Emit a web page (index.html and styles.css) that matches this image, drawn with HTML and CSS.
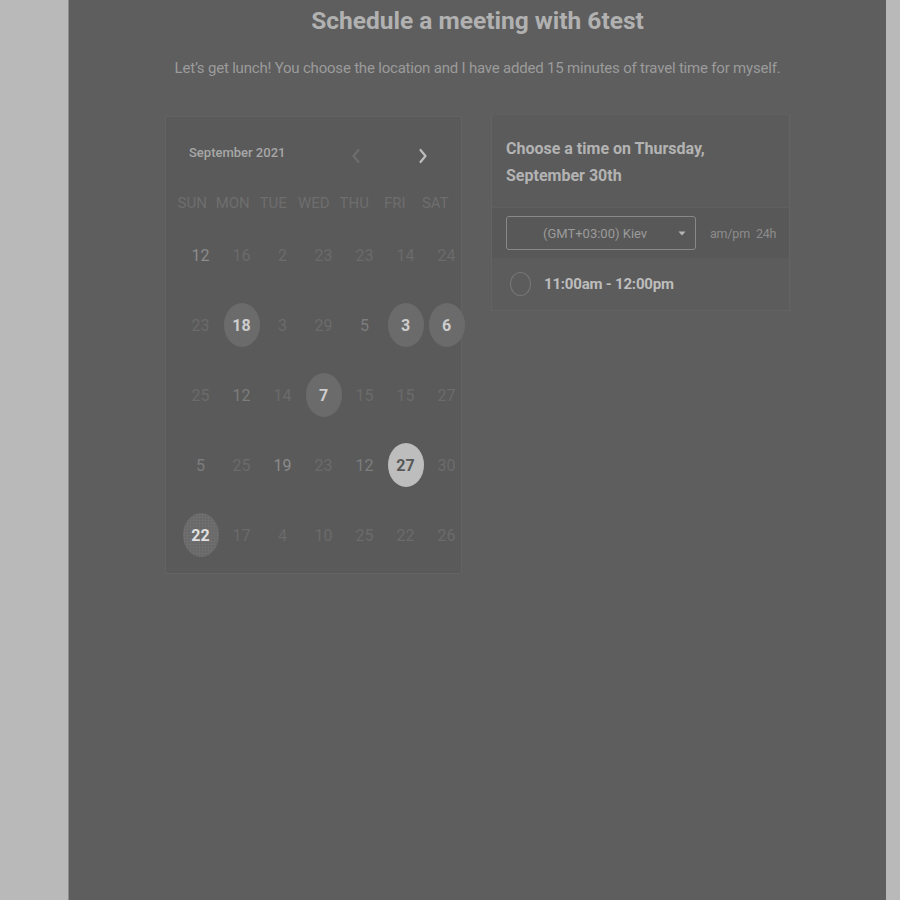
FILE: index.html
```html
<!DOCTYPE html>
<html lang="en">
<head>
<meta charset="utf-8">
<title>Schedule a meeting</title>
<link rel="stylesheet" href="styles.css">
</head>
<body>
<div class="page">
  <main class="panel">
    <h1 class="title">Schedule a meeting with 6test</h1>
    <p class="subtitle">Let’s get lunch! You choose the location and I have added 15 minutes of travel time for myself.</p>
    <div class="cards">
      <section class="calendar">
        <div class="cal-head">
          <span class="month">September 2021</span>
          <span class="nav prev"><svg width="10" height="16" viewBox="0 0 10 16"><path d="M7.5 2 L2.5 8 L7.5 14" fill="none" stroke="currentColor" stroke-width="2" stroke-linecap="round" stroke-linejoin="round"/></svg></span>
          <span class="nav next"><svg width="10" height="16" viewBox="0 0 10 16"><path d="M2.5 2 L7.5 8 L2.5 14" fill="none" stroke="currentColor" stroke-width="2.2" stroke-linecap="round" stroke-linejoin="round"/></svg></span>
        </div>
        <div class="weekdays">
          <span>SUN</span><span>MON</span><span>TUE</span><span>WED</span><span>THU</span><span>FRI</span><span>SAT</span>
        </div>
        <div class="days">
          <span class="day br">12</span><span class="day">16</span><span class="day">2</span><span class="day">23</span><span class="day">23</span><span class="day">14</span><span class="day">24</span>
          <span class="day">23</span><span class="day sel"><b>18</b></span><span class="day">3</span><span class="day">29</span><span class="day md">5</span><span class="day sel"><b>3</b></span><span class="day sel"><b>6</b></span>
          <span class="day">25</span><span class="day md">12</span><span class="day">14</span><span class="day sel"><b>7</b></span><span class="day">15</span><span class="day">15</span><span class="day">27</span>
          <span class="day md">5</span><span class="day">25</span><span class="day br">19</span><span class="day">23</span><span class="day md">12</span><span class="day active"><b>27</b></span><span class="day">30</span>
          <span class="day today"><b>22</b></span><span class="day">17</span><span class="day">4</span><span class="day">10</span><span class="day">25</span><span class="day">22</span><span class="day">26</span>
        </div>
      </section>
      <section class="times">
        <div class="times-head">Choose a time on Thursday,<br>September 30th</div>
        <div class="tz-row">
          <div class="tz-select">
            <span>(GMT+03:00) Kiev</span>
            <svg class="caret" width="8" height="5" viewBox="0 0 8 5"><path d="M0.5 0.5 H7.5 L4 4.5 Z" fill="currentColor"/></svg>
          </div>
          <div class="fmt"><span>am/pm</span><span>24h</span></div>
        </div>
        <div class="slot">
          <span class="radio"></span>
          <span class="slot-text">11:00am - 12:00pm</span>
        </div>
      </section>
    </div>
  </main>
</div>
</body>
</html>
```
FILE: styles.css
```css
html, body {
  margin: 0;
  padding: 0;
  background: #b9b9b9;
  font-family: Roboto, "Liberation Sans", sans-serif;
}
.page {
  display: flex;
  height: 900px;
  overflow: hidden;
}
.panel {
  margin-left: 68px;
  width: 817px;
  height: 900px;
  background: #5e5e5e;
  border-left: 1px solid #8e8e8e;
  display: flex;
  flex-direction: column;
  align-items: center;
}
.title {
  margin: 6px 0 0;
  font-size: 24.5px;
  line-height: 30px;
  font-weight: 700;
  letter-spacing: 0;
  color: #b1b1b1;
}
.subtitle {
  margin: 22px 0 0;
  font-size: 15px;
  line-height: 20px;
  font-weight: 400;
  letter-spacing: -0.2px;
  color: #9b9b9b;
}
.cards {
  margin-top: 36px;
  display: flex;
  align-items: flex-start;
  gap: 29px;
}
.calendar {
  margin-top: 2px;
  width: 295px;
  height: 456px;
  background: #5a5a5a;
  border: 1px solid #636363;
}
.cal-head {
  height: 68px;
  display: flex;
  align-items: center;
  padding-left: 23px;
}
.month {
  font-size: 13px;
  font-weight: 500;
  color: #a7a7a7;
  width: 160px;
  margin-top: 2px;
}
.nav {
  display: flex;
  margin-top: 10px;
}
.prev { color: #6e6e6e; margin-left: 2px; }
.next { color: #bdbdbd; margin-left: 57px; }
.weekdays {
  display: grid;
  grid-template-columns: repeat(7, 40.5px);
  padding-left: 6px;
  height: 35px;
  align-items: center;
  font-size: 15px;
  color: #6e6e6e;
}
.weekdays span { text-align: center; }
.days {
  display: grid;
  grid-template-columns: repeat(7, 41px);
  grid-auto-rows: 70px;
  padding-left: 14px;
}
.day {
  display: flex;
  align-items: center;
  justify-content: center;
  font-size: 16px;
  color: #6b6b6b;
}
.day.md { color: #7d7d7d; }
.day.br { color: #8c8c8c; }
.day b {
  width: 36px;
  height: 44px;
  border-radius: 50%;
  display: flex;
  align-items: center;
  justify-content: center;
  font-weight: 700;
}
.day.sel b { background: #6b6b6b; color: #cdcdcd; }
.day.active b { background: #bdbdbd; color: #585858; }
.day.today b {
  color: #e0e0e0;
  background-color: #696969;
  background-image: radial-gradient(circle, #727272 0.8px, transparent 1.2px);
  background-size: 3px 3px;
}
.times {
  width: 297px;
  background: #5b5b5b;
  border: 1px solid #636363;
  border-top-color: #606060;
}
.times-head {
  padding: 20px 15px 18px 14px;
  font-size: 16px;
  line-height: 27px;
  font-weight: 700;
  color: #b3b3b3;
  height: 54px;
}
.tz-row {
  display: flex;
  align-items: center;
  height: 50px;
  padding-left: 14px;
  background: #585858;
  border-top: 1px solid #5f5f5f;
}
.tz-select {
  border: 1px solid #888;
  border-radius: 3px;
  display: flex;
  align-items: center;
  padding-left: 36px;
  box-sizing: border-box;
  width: 190px;
  height: 34px;
  font-size: 13px;
  color: #9b9b9b;
}
.tz-select span { flex: 1; }
.caret { color: #b5b5b5; margin-right: 9px; }
.fmt {
  margin-left: 14px;
  display: flex;
  gap: 6px;
  font-size: 12.5px;
  color: #8d8d8d;
  letter-spacing: -0.2px;
}
.slot {
  height: 52px;
  display: flex;
  align-items: center;
  padding-left: 18px;
  background: #5c5c5c;
}
.radio {
  width: 19px;
  height: 22px;
  border: 1.5px solid #777;
  border-radius: 50%;
  margin-right: 13px;
}
.slot-text {
  font-size: 15px;
  font-weight: 700;
  color: #bdbdbd;
  letter-spacing: -0.2px;
}
```
